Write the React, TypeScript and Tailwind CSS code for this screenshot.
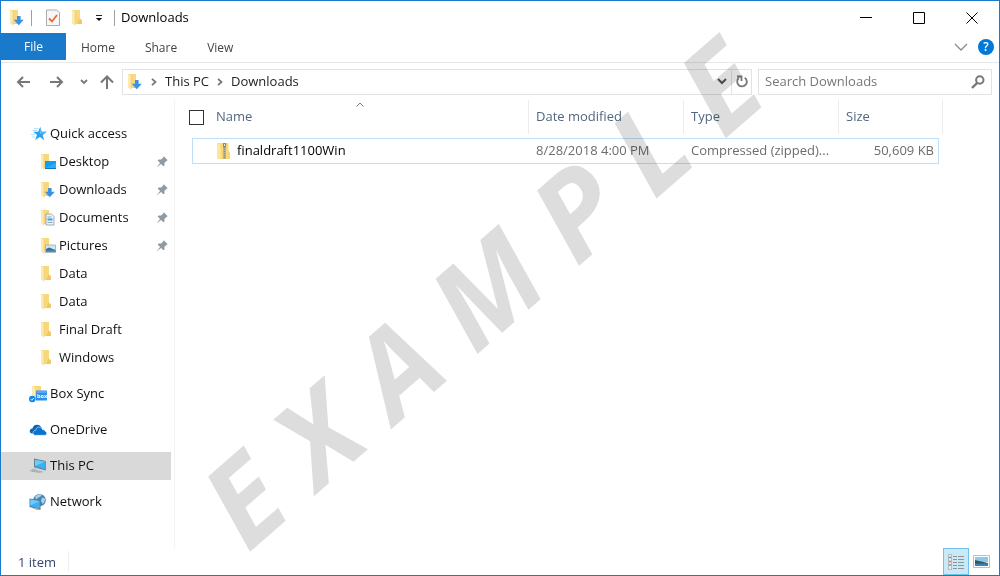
import type { ReactNode } from 'react'

type IconProps = { className?: string }

function FolderShape() {
  return (
    <>
      <path d="M1 0h8v8.600l1.800 2V14H1z" fill="#f9d77c" />
      <path d="M9 8.600l1.800 2V14H6z" fill="#f2c660" />
      <path d="M1 0l3 1.600V15.500L1 13.800z" fill="#fdeab0" />
      <path d="M4 1.600V15.500" stroke="#f0c765" strokeWidth=".5" />
    </>
  )
}

function FolderIcon({ children, className = 'w-4 h-4' }: { children?: ReactNode; className?: string }) {
  return (
    <svg viewBox="0 0 16 16" className={`shrink-0 ${className}`} aria-hidden="true">
      <FolderShape />
      {children}
    </svg>
  )
}

function DownloadsIcon() {
  return (
    <FolderIcon>
      <path d="M8 6h3.600v3.700h3.200l-5 5.500-5-5.500H8z" fill="#3b93e0" />
    </FolderIcon>
  )
}

function DesktopIcon() {
  return (
    <FolderIcon>
      <rect x="5" y="7" width="11" height="7.500" fill="#149cf0" />
      <path d="M5 14l11-5v5.500H5z" fill="#29aefb" />
      <path d="M5 14.500h11" stroke="#0c79c4" />
    </FolderIcon>
  )
}

function DocumentsIcon() {
  return (
    <FolderIcon>
      <path d="M6 4h5.500L14 6.500V15H6z" fill="#eef3f7" stroke="#8c9aa5" strokeWidth=".8" />
      <path d="M7.500 7h4M7.500 12.500h5" stroke="#8fa7ba" />
      <path d="M7.500 9.500h5" stroke="#3f9fdc" strokeWidth="2" />
    </FolderIcon>
  )
}

function Photo() {
  return (
    <>
      <rect x="5.500" y="7" width="10" height="7.500" fill="#cfe6f7" stroke="#a6adb3" strokeWidth=".8" />
      <path d="M6 11l3-1.500 6.500 2.500v2H6z" fill="#3c6f80" />
      <path d="M6 12.500h9v1.500H6z" fill="#4a90cc" />
    </>
  )
}

function ZipIcon() {
  return (
    <svg viewBox="0 0 16 18" className="w-4 h-[18px] shrink-0" aria-hidden="true">
      <path d="M1 1h11.500v8l1.500 1.500V17H1z" fill="#f8d775" />
      <path d="M1 1l3.500 1v15H1z" fill="#fde69f" />
      <path d="M7 1h3v16H7z" fill="#b9b59f" />
      <path d="M8.500 1v16" stroke="#858b8c" strokeWidth="1.200" strokeDasharray="1 1" />
      <rect x="7" y="1" width="3" height="4.500" rx="1" fill="#7c8990" />
      <path d="M8.500 2v2" stroke="#e4e8ea" />
    </svg>
  )
}

function StarIcon() {
  return (
    <svg viewBox="0 0 16 16" className="w-4 h-4 shrink-0" aria-hidden="true">
      <path d="M9.200 1l1.500 4.700 5.100.1-4.100 3.100 1.500 5.300-4.300-3.100-4.700 3 1.800-5.300L2 5.800l5.200-.1z" fill="#2aa2ee" />
      <path d="M9.200 1l1.500 4.700 5.100.1-7 2.400z" fill="#5cc0fa" />
      <path d="M3 2.500h4.500M1.500 4.500h5M0 8.500h4M1 11h3.500" stroke="#8fd0f5" strokeWidth=".6" />
    </svg>
  )
}

function BoxSyncIcon() {
  return (
    <svg viewBox="0 0 18 18" className="w-[18px] h-[18px] shrink-0" aria-hidden="true">
      <path d="M3 1h9v13H3z" fill="#f9d77c" />
      <path d="M3 1l3 1.400V14H3z" fill="#fdeab0" />
      <rect x="7" y="5.500" width="11" height="10" rx=".6" fill="#2f8de8" />
      <path d="M7.500 6h10v2h-10z" fill="#57a9f3" />
      <text x="8" y="12.500" fill="#fff" fontSize="5.500" fontWeight="700" fontFamily="Open Sans, sans-serif">box</text>
      <circle cx="3.300" cy="14" r="3.300" fill="#1686ee" />
      <path d="M1.800 14.200l1 1 2.200-2.300" stroke="#fff" strokeWidth=".9" fill="none" />
    </svg>
  )
}

// back cloud, then front cloud with a thin light gap between the two
function OneDriveIcon() {
  return (
    <svg viewBox="0 0 18 14" className="w-[18px] h-[14px] shrink-0" aria-hidden="true">
      <path d="M4.500 10.500H3.200C1.500 10.500 .5 9.300.8 7.700 1 6.200 2.200 5.400 3.500 5.500 4 3 5.700 1.600 8 1.700c2.200 0 4 1.200 4.600 3.300L8 9z" fill="#0a64b8" />
      <path
        d="M6.300 12.300C4.600 12.200 3.700 10.900 4.100 9.300c.3-1.300 1.400-2.100 2.600-2C7 5.200 8.500 4 10.200 4.100c1.600 0 2.900 1 3.400 2.600 1.200-.3 2.300.4 2.500 1.600 1 .2 1.700 1.100 1.600 2.100-.1 1.100-.9 1.900-2.100 1.900z"
        fill="#0a72d1"
        stroke="#fff"
        strokeWidth=".5"
      />
    </svg>
  )
}

function PcIcon() {
  return (
    <svg viewBox="0 0 18 16" className="w-[18px] h-4 shrink-0" aria-hidden="true">
      <path d="M5 .5L16.800 3v9.500L5 9.300z" fill="#6b7b87" />
      <path d="M6 1.700l10 2.100v7.400L6 8.600z" fill="#38b0f3" />
      <path d="M6 1.700l10 2.100L6 8z" fill="#6bccfb" />
      <path d="M3.500 10.500l12 3-3 1.700L0 13.500z" fill="#c3c9cd" />
      <path d="M3 11.500l10 2.500M1.500 12.500l9 2.200M7 10.500l-4 3.500" stroke="#8e989f" strokeWidth=".5" />
    </svg>
  )
}

function NetworkIcon() {
  return (
    <svg viewBox="0 0 18 18" className="w-[18px] h-[18px] shrink-0" aria-hidden="true">
      <circle cx="10.500" cy="7.200" r="6.200" fill="#3d87bd" />
      <path d="M6 4c2-3 6-3.200 7-2.200l-2 2.200-2 .5-1.500 2zM13 4.500l3 1-.5 3.500-2 2-1.500-3z" fill="#aed0e6" />
      <path d="M.5 5.500l11 2v9.500l-11-3z" fill="#63798a" />
      <path d="M1.300 6.500l9.400 1.800v7.300l-9.400-2.500z" fill="#3ab2f4" />
      <path d="M1.300 6.500l9.400 1.800-9.400 4z" fill="#6bccfb" />
      <path d="M3.500 15.300l2-.7 4 1.200-1 1.500z" fill="#a7b0b6" />
    </svg>
  )
}

function PinIcon() {
  return (
    <svg viewBox="0 0 12 12" className="w-3 h-3 shrink-0" aria-hidden="true">
      <path d="M7.800.3l3.900 3.900-1.300.7-2 2 .1 2.500-1 .9L5 7.900.4 11.600 4.100 7 1.700 4.500l.9-1 2.500.1 2-2z" fill="#8f9aa2" />
    </svg>
  )
}

function Stroke({ d, box, className, width = 2 }: IconProps & { d: string; box: string; width?: number }) {
  return (
    <svg viewBox={box} className={className} fill="none" stroke="currentColor" strokeWidth={width} aria-hidden="true">
      <path d={d} />
    </svg>
  )
}

interface NavItem {
  label: string
  icon: ReactNode
  child?: boolean
  pinned?: boolean
  active?: boolean
}

const QUICK_ACCESS: NavItem[] = [
  { label: 'Quick access', icon: <StarIcon /> },
  { label: 'Desktop', icon: <DesktopIcon />, child: true, pinned: true },
  { label: 'Downloads', icon: <DownloadsIcon />, child: true, pinned: true },
  { label: 'Documents', icon: <DocumentsIcon />, child: true, pinned: true },
  { label: 'Pictures', icon: <FolderIcon><Photo /></FolderIcon>, child: true, pinned: true },
  { label: 'Data', icon: <FolderIcon />, child: true },
  { label: 'Data', icon: <FolderIcon />, child: true },
  { label: 'Final Draft', icon: <FolderIcon />, child: true },
  { label: 'Windows', icon: <FolderIcon />, child: true },
]

const GROUPS: NavItem[][] = [
  QUICK_ACCESS,
  [{ label: 'Box Sync', icon: <BoxSyncIcon /> }],
  [{ label: 'OneDrive', icon: <OneDriveIcon /> }],
  [{ label: 'This PC', icon: <PcIcon />, active: true }],
  [{ label: 'Network', icon: <NetworkIcon /> }],
]

function TitleBar() {
  return (
    <header className="flex h-8 items-center pt-0.5 pl-2 text-black">
      <DownloadsIcon />
      <span className="ml-1.5 h-4 w-px bg-[#a0a0a0]" />
      <button type="button" aria-label="Properties" className="ml-3.5">
        <svg viewBox="0 0 14 18" className="h-[18px] w-3.5" aria-hidden="true">
          <path d="M.5 1h10L13.500 3.500V16.500H.5z" fill="#f6f6f8" stroke="#a9abb5" />
          <path d="M3 9.500l3 3L11 6" fill="none" stroke="#ec6a2c" strokeWidth="1.800" />
        </svg>
      </button>
      <button type="button" aria-label="New folder" className="ml-[11px]"><FolderIcon /></button>
      <button type="button" aria-label="Customize toolbar" className="ml-2">
        <svg viewBox="0 0 8 8" className="h-2 w-2" aria-hidden="true">
          <path d="M1 1.500h6" stroke="#222" />
          <path d="M.8 4h6.400L4 7z" fill="#111" />
        </svg>
      </button>
      <span className="ml-[11px] h-4 w-px bg-[#a0a0a0]" />
      <h1 className="ml-1.5 flex-1 text-[13px]">Downloads</h1>
      <div className="flex pr-px">
        <button type="button" aria-label="Minimize" className="flex h-[30px] w-[53px] items-center justify-center">
          <Stroke box="0 0 12 12" d="M0 5.500h12" width={1} className="h-3 w-3" />
        </button>
        <button type="button" aria-label="Maximize" className="flex h-[30px] w-[53px] items-center justify-center">
          <Stroke box="0 0 12 12" d="M.5.5h11v11H.5z" width={1} className="h-3 w-3" />
        </button>
        <button type="button" aria-label="Close" className="flex h-[30px] w-[53px] items-center justify-center">
          <Stroke box="0 0 12 12" d="M.5.5l11 11M11.500.5l-11 11" width={1} className="h-3 w-3" />
        </button>
      </div>
    </header>
  )
}

function RibbonTabs() {
  return (
    <nav className="flex h-[30px] border-b border-[#e8e8e8] pb-0.5 text-xs text-[#444]" aria-label="Ribbon">
      <button type="button" className="w-[65px] bg-[#1979ca] text-white">File</button>
      <button type="button" className="px-[15px] pt-0.5">Home</button>
      <button type="button" className="px-[15px] pt-0.5">Share</button>
      <button type="button" className="px-[15px] pt-0.5">View</button>
      <span className="flex-1" />
      <button type="button" aria-label="Expand ribbon" className="text-[#8a8a8a]">
        <Stroke box="0 0 14 8" d="M1 1l6 6 6-6" width={1.3} className="h-2 w-3.5" />
      </button>
      <button type="button" aria-label="Help" className="mr-[5px] ml-2.5 self-center">
        <span className="flex h-4 w-4 items-center justify-center rounded-full bg-[#0078d7] text-xs leading-4 font-semibold text-white">?</span>
      </button>
    </nav>
  )
}

function Crumb({ children }: { children: ReactNode }) {
  return (
    <>
      <Stroke box="0 0 6 8" d="M1 .8L4.500 4 1 7.200" className="mx-2 h-2 w-1.5 text-[#777]" width={1.8} />
      <a href="#" className="text-[#222]">{children}</a>
    </>
  )
}

function AddressBar() {
  return (
    <div className="flex h-[37px] items-center pr-[7px] pl-[15px] text-[13px] text-[#777]">
      <button type="button" aria-label="Back">
        <Stroke box="0 0 14 12" d="M7 1L2 6l5 5M2 6h12" className="h-3 w-3.5" />
      </button>
      <button type="button" aria-label="Forward" className="ml-5">
        <Stroke box="0 0 14 12" d="M7 1l5 5-5 5M12 6H0" className="h-3 w-3.5" />
      </button>
      <button type="button" aria-label="Recent locations" className="ml-4">
        <Stroke box="0 0 8 6" d="M1 1l3 3 3-3" width={1.8} className="h-1.5 w-2" />
      </button>
      <button type="button" aria-label="Up" className="ml-3">
        <Stroke box="0 0 14 14" d="M1 7.500l6-6 6 6M7 2v12" className="h-3.5 w-3.5" />
      </button>
      <div className="ml-2 flex h-[26px] flex-1 items-center border border-[#e2e2e2] pl-1">
        <DownloadsIcon />
        <Crumb>This PC</Crumb>
        <Crumb>Downloads</Crumb>
        <span className="flex-1" />
        <button type="button" aria-label="Previous locations" className="mr-1 text-[#555]">
          <Stroke box="0 0 10 7" d="M1 1l4 4 4-4" className="h-[7px] w-2.5" />
        </button>
        <button type="button" aria-label="Refresh" className="flex h-full w-5 items-center justify-center border-l border-[#e2e2e2]">
          <svg viewBox="0 0 12 13" className="h-[13px] w-3" fill="none" stroke="currentColor" strokeWidth="1.800" aria-hidden="true">
            <path d="M8.800 2.700A4.800 4.800 0 1 1 2.900 3" />
            <path d="M1 1.500h4.500V6" />
          </svg>
        </button>
      </div>
      <label className="ml-1.5 flex h-[26px] w-[234px] items-center border border-[#e2e2e2] pr-1.5 pl-1.5">
        <input
          type="text"
          aria-label="Search Downloads"
          placeholder="Search Downloads"
          className="min-w-0 flex-1 bg-transparent outline-none placeholder:text-[#777]"
        />
        <svg viewBox="0 0 14 14" className="h-3.5 w-3.5" fill="none" stroke="currentColor" strokeWidth="2" aria-hidden="true">
          <circle cx="8.800" cy="5" r="3.700" />
          <path d="M6.200 7.800L1 13" strokeWidth="2.400" />
        </svg>
      </label>
    </div>
  )
}

function Sidebar() {
  return (
    <nav className="flex w-[174px] shrink-0 flex-col gap-2 border-r border-[#f2f2f2] pt-5 pr-[3px] text-[13px] text-[#111]" aria-label="Folders">
      {GROUPS.map((group, i) => (
        <ul key={i}>
          {group.map((item, j) => (
            <li key={j}>
              <a href="#" className={`flex h-7 items-center pr-[3px] ${item.active ? 'bg-[#d9d9d9]' : ''} ${item.child ? 'pl-[39px]' : 'pl-7'}`}>
                <span className={`flex shrink-0 items-center justify-end ${item.child ? 'w-4' : 'w-[18px]'}`}>{item.icon}</span>
                <span className="ml-[3px] flex-1">{item.label}</span>
                {item.pinned && <PinIcon />}
              </a>
            </li>
          ))}
        </ul>
      ))}
    </nav>
  )
}

function FileTable() {
  const head = 'border-r border-[#ececec] pl-[7px] text-left font-normal'
  const cell = 'border-y border-[#bfe0f8]'
  return (
    <main className="min-w-0 flex-1 pl-[17px]">
      <table className="w-[751px] table-fixed border-separate border-spacing-0 text-[13px]">
        <colgroup>
          <col className="w-[337px]" />
          <col className="w-[155px]" />
          <col className="w-[155px]" />
          <col className="w-[100px]" />
          <col className="w-1" />
        </colgroup>
        <thead className="text-[#52677f]">
          <tr className="h-[34px]">
            <th className="relative border-r border-[#ececec] text-left font-normal">
              <div className="flex items-center">
                <input type="checkbox" aria-label="Select all" className="-ml-[3px] h-[15px] w-[15px] appearance-none border border-[#333] bg-white" />
                <span className="ml-3">Name</span>
              </div>
              <Stroke box="0 0 8 5" d="M.5 4.500L4 1l3.500 3.500" width={1} className="absolute top-0.5 left-1/2 h-[5px] w-2 -translate-x-1/2 text-[#777]" />
            </th>
            <th className={head}>Date modified</th>
            <th className={head}>Type</th>
            <th className={head} colSpan={2}>Size</th>
          </tr>
        </thead>
        <tbody className="text-[#6d6d6d]">
          <tr className="h-1"><td colSpan={5} /></tr>
          <tr className="h-[26px]">
            <td className={`${cell} border-l`}>
              <div className="flex items-center pl-[23px] text-black">
                <ZipIcon />
                <span className="ml-[5px]">finaldraft1100Win</span>
              </div>
            </td>
            <td className={`${cell} pl-[7px]`}>8/28/2018 4:00 PM</td>
            <td className={`${cell} pl-[7px] whitespace-nowrap`}>Compressed (zipped)...</td>
            <td className={`${cell} border-r pr-1 text-right`}>50,609 KB</td>
            <td />
          </tr>
        </tbody>
      </table>
    </main>
  )
}

function StatusBar() {
  return (
    <footer className="flex h-[27px] items-center pl-[17px] text-[13px] text-[#33476b]">
      <span className="border-r border-[#efefef] pt-0.5 pr-3">1 item</span>
      <span className="flex-1" />
      <button type="button" aria-label="Details view" className="flex h-[27px] w-[26px] items-center justify-center border border-[#6fc3ea] bg-[#cbe8f6]">
        <svg viewBox="0 0 16 16" className="h-4 w-4" aria-hidden="true">
          <path d="M.5.500h3v15h-3z" fill="#eef2f3" stroke="#9aa5a9" strokeWidth=".7" />
          <path d="M1 3.500h2M1 11h2" stroke="#7d8a8f" strokeWidth="1.500" />
          <path d="M1 7.500h2" stroke="#e58b58" strokeWidth="2" />
          <path d="M5 2.500h4M5 5.500h4M5 8.500h4M5 11.500h4M5 14.500h4M10 2.500h6M10 5.500h6M10 8.500h6M10 11.500h6M10 14.500h6" stroke="#89979c" />
        </svg>
      </button>
      <button type="button" aria-label="Large icons view" className="mr-[9px] ml-1">
        <svg viewBox="0 0 17 13" className="h-[13px] w-[17px]" aria-hidden="true">
          <path d="M.5.5h16v12H.5z" fill="#fff" stroke="#b9bec3" />
          <path d="M2 2h13v5H2z" fill="#8fc6f0" />
          <path d="M2 5l4 1 9 2v1H2z" fill="#2f5d55" />
          <path d="M2 8.500h13V11H2z" fill="#3a7fc4" />
        </svg>
      </button>
    </footer>
  )
}

export default function App() {
  return (
    <div className="relative flex min-h-screen flex-col overflow-hidden border border-[#1979ca] bg-white font-['Open_Sans','Noto_Sans',sans-serif]">
      <TitleBar />
      <RibbonTabs />
      <AddressBar />
      <div className="flex flex-1">
        <Sidebar />
        <FileTable />
      </div>
      <StatusBar />
      <div className="pointer-events-none absolute inset-0 flex items-center justify-center pt-2 pr-10 mix-blend-multiply">
        <span className="-rotate-41 text-[118px] leading-none font-bold whitespace-nowrap text-[#ddd] italic">E X A M P L E</span>
      </div>
    </div>
  )
}
